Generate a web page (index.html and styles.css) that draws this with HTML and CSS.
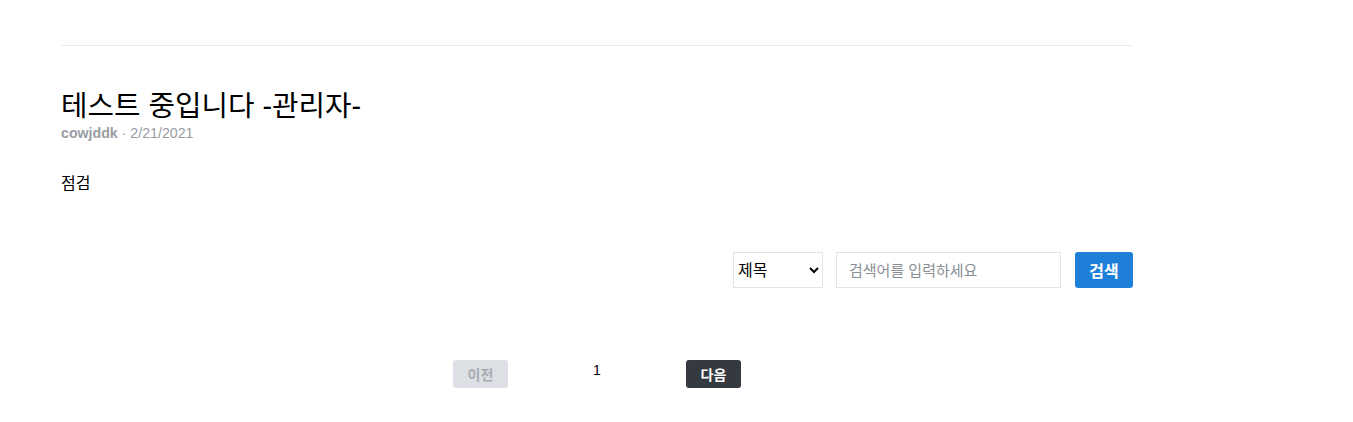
FILE: index.html
```html
<!DOCTYPE html>
<html lang="ko">
<head>
<meta charset="utf-8">
<link rel="stylesheet" href="styles.css">
</head>
<body>
<div class="container">
  <hr class="divider">
  <article class="post">
    <h1 class="post-title">테스트 중입니다 -관리자-</h1>
    <div class="post-meta"><span class="author">cowjddk</span> · 2/21/2021</div>
    <div class="post-body">점검</div>
  </article>
  <form class="search">
    <select class="search-select">
      <option>제목</option>
    </select>
    <input class="search-input" type="text" placeholder="검색어를 입력하세요">
    <button type="button" class="search-btn">검색</button>
  </form>
  <nav class="pager">
    <button type="button" class="pager-btn prev">이전</button>
    <span class="pager-num">1</span>
    <button type="button" class="pager-btn next">다음</button>
  </nav>
</div>
</body>
</html>
```
FILE: styles.css
```css
html, body {
  margin: 0;
  padding: 0;
  background: #fff;
}
body {
  font-family: "Liberation Sans", "Noto Sans CJK KR", sans-serif;
  color: #000;
}
.container {
  width: 1072px;
  margin-left: 61px;
  padding-top: 45px;
}
.divider {
  margin: 0;
  border: 0;
  border-top: 1px solid #e9ecef;
}
.post {
  padding-top: 43px;
}
.post-title {
  margin: 0;
  font-size: 28.8px;
  font-weight: 400;
  line-height: 35px;
}
.post-meta {
  margin-top: 0;
  font-size: 14.2px;
  line-height: 18px;
  color: #999da3;
}
.author {
  font-weight: 700;
}
.post-body {
  margin-top: 30px;
  font-size: 16px;
  line-height: 24px;
}
.search {
  display: flex;
  justify-content: flex-end;
  align-items: center;
  margin-top: 56px;
}
.search-select {
  width: 90px;
  height: 36px;
  box-sizing: border-box;
  border: 1px solid #e2e4e7;
  background: #fff;
  font-family: "Liberation Sans", "Noto Sans CJK KR", sans-serif;
  font-size: 16px;
  color: #000;
  padding: 0;
  border-radius: 0;
}
.search-input {
  margin-left: 13px;
  width: 225px;
  height: 36px;
  box-sizing: border-box;
  border: 1px solid #e2e4e7;
  padding: 0 12px;
  font-family: "Liberation Sans", "Noto Sans CJK KR", sans-serif;
  font-size: 15px;
  outline: none;
}
.search-input::placeholder {
  color: #8a8f95;
}
.search-btn {
  margin-left: 14px;
  width: 58px;
  height: 36px;
  border: 0;
  border-radius: 3px;
  background: #1e7fd8;
  color: #fff;
  font-family: "Noto Sans CJK KR", sans-serif;
  font-weight: 700;
  font-size: 16px;
  padding: 0;
}
.pager {
  display: flex;
  justify-content: center;
  align-items: center;
  margin-top: 72px;
}
.pager-btn {
  width: 55px;
  height: 28px;
  border: 0;
  border-radius: 3px;
  font-family: "Noto Sans CJK KR", sans-serif;
  font-weight: 700;
  font-size: 14px;
  padding: 0;
}
.prev {
  background: #dcdfe3;
  color: #a8acb1;
}
.next {
  background: #343a40;
  color: #fff;
}
.pager-num {
  width: 178px;
  text-align: center;
  font-size: 14px;
  margin-top: -8px;
}
```
